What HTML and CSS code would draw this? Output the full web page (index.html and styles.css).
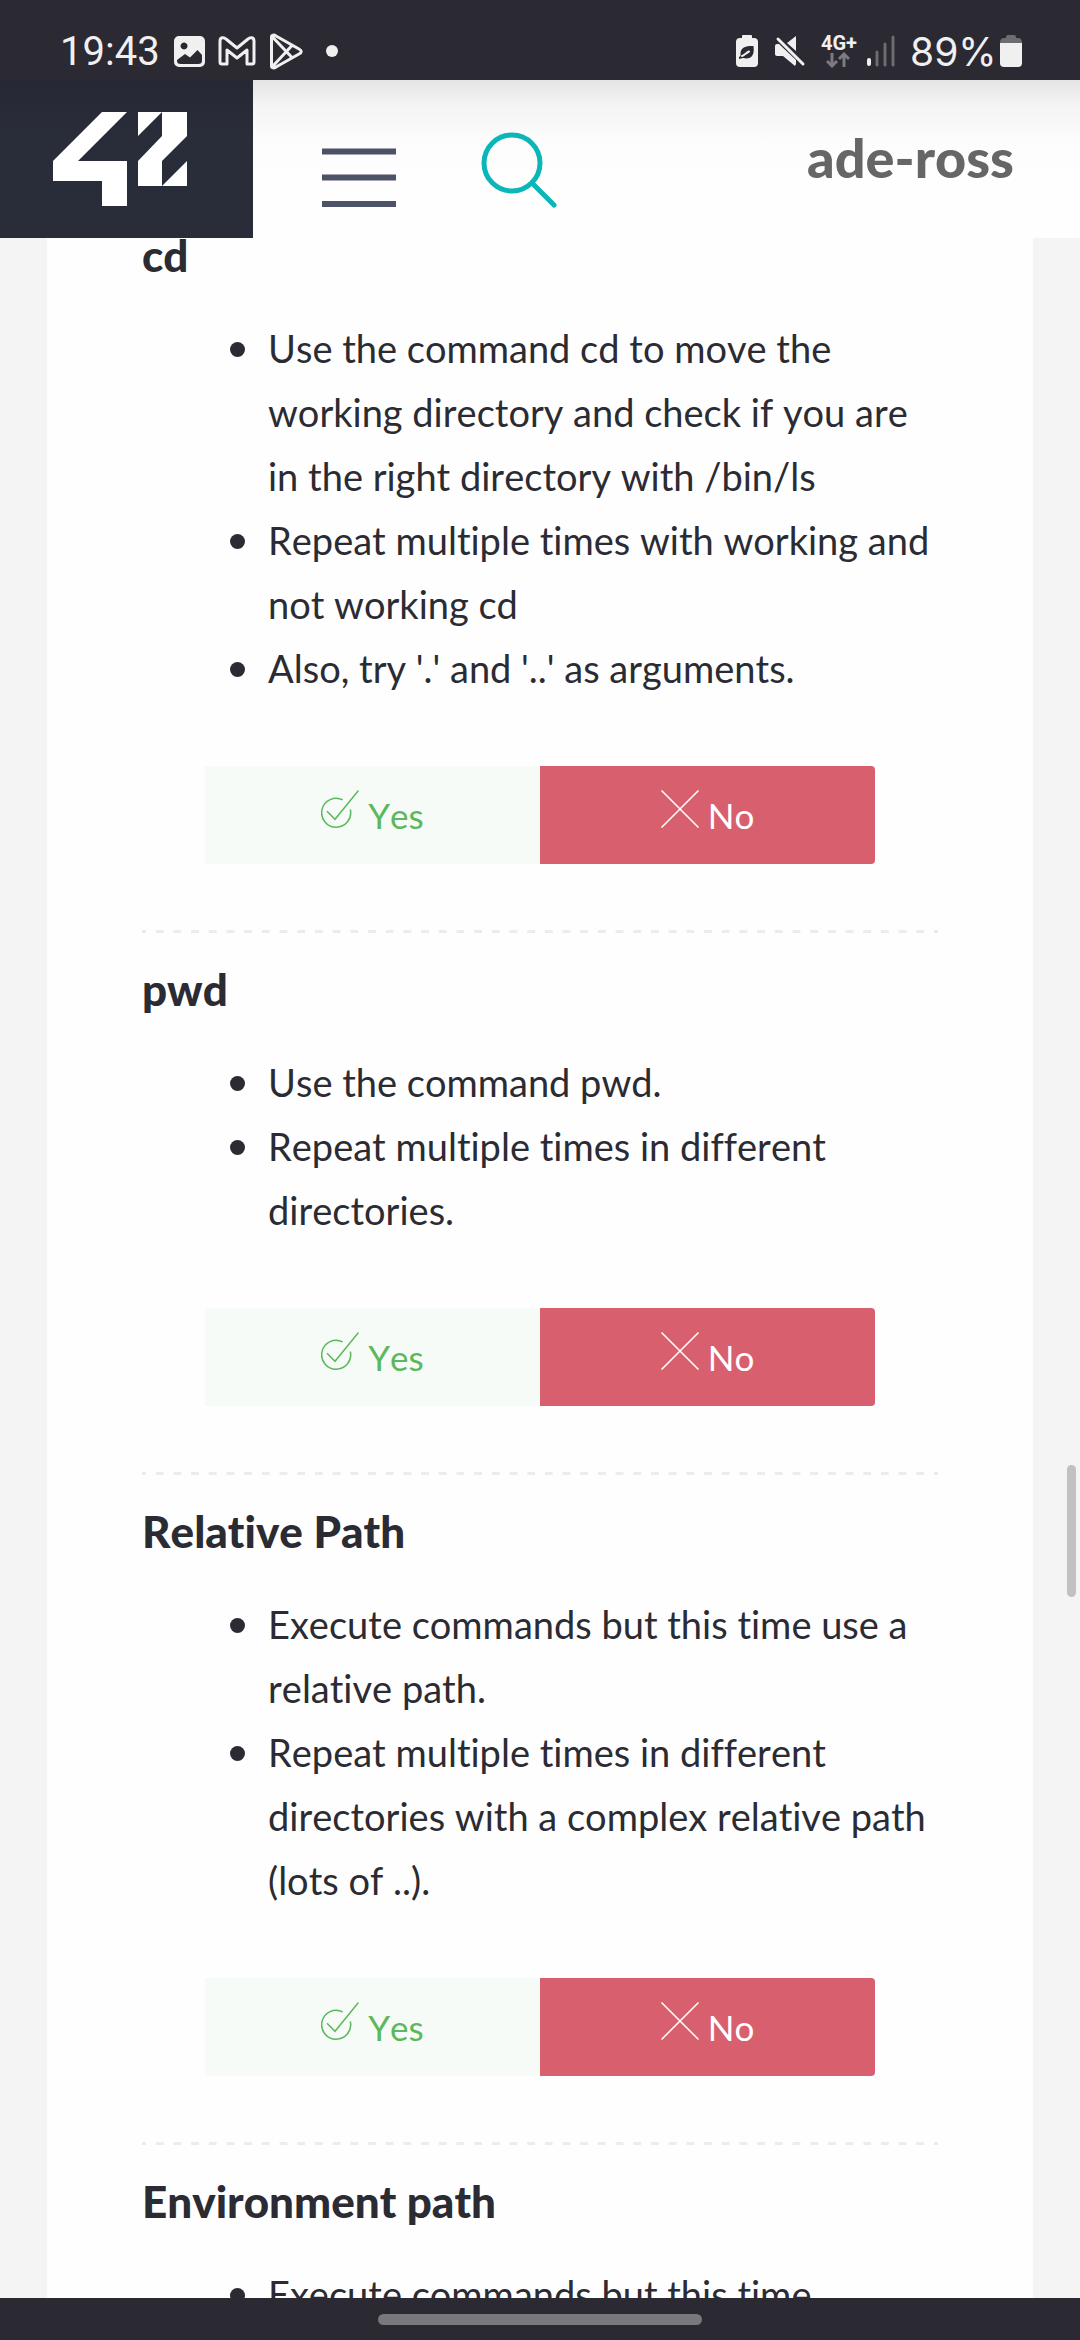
FILE: index.html
```
<!DOCTYPE html>
<html lang="en">
<head>
<meta charset="utf-8">
<meta name="viewport" content="width=device-width, initial-scale=1">
<title>Evaluation</title>
<link rel="stylesheet" href="styles.css">
</head>
<body>
<svg class="defs" aria-hidden="true">
  <symbol id="check" viewBox="0 0 38 38"><path d="M21.700 9.800A14.500 14.500 0 1 0 29.300 19.500M6 21.300 14 29.300 37.500.500"/></symbol>
  <symbol id="cross" viewBox="0 0 38 38"><path d="M.500.500 37.500 37.500M37.500.500.500 37.500"/></symbol>
</svg>
<div class="status">
  <span class="time">19:43</span>
  <svg class="notices" viewBox="174 32 166 38" aria-hidden="true">
    <path fill-rule="evenodd" d="M179 36H200a5 5 0 0 1 5 5V62a5 5 0 0 1-5 5H179a5 5 0 0 1-5-5V41a5 5 0 0 1 5-5ZM184 42.500a3.500 3.500 0 1 0 .1 0ZM177 60.500C177 63 178 64 181 64H198C201 64 202 63 202 60.500V55L197.500 50 190 57.500 185 54 177 60Z"/>
    <path class="line" d="M220 62V41C220 37 224 37 226 39L237 48 248 39C250 37 254 37 254 41V62C254 64 253 64 252 64H247V50L237 58 227 50V64H222C221 64 220 64 220 62Z"/>
    <path class="line" d="M271.500 37V66C271.500 68 274 68.500 276 67L299 54C302 52.500 302 50.500 299 49L276 36C274 34.500 271.500 35 271.500 37ZM272.500 37 292 57.500M272.500 66.500 292 45.500"/>
    <circle cx="332" cy="51" r="6"/>
  </svg>
  <span class="grow"></span>
  <svg class="modes" viewBox="737 34 70 34" aria-hidden="true">
    <path d="M743 38V36Q743 35 744 35H752Q753 35 753 36V38H755Q759 38 759 42V63Q759 67 755 67H741Q737 67 737 63V42Q737 38 741 38Z"/>
    <path class="leaf" d="M754.500 46C746 45.500 742 48 741.500 53L741.500 56 740 57V59L744 58C751 59.500 756 57 754.500 46Z"/>
    <path class="vein" d="M743 56C745 55.500 747 53 750 51.500"/>
    <path d="M780 44H778Q776 44 776 46V54Q776 56 778 56H784L796 66 797 64V60ZM788 43 797 36V51Z"/>
    <path class="line" d="M779 39 804 64"/>
  </svg>
  <span class="network"><span>4G+</span>
    <svg class="arrows" viewBox="0 0 24 16" aria-hidden="true"><path d="M6 1V14M1 9 6 14 11 9M18 15V2M13 7 18 2 23 7"/></svg>
  </span>
  <svg class="signal" viewBox="0 0 28 32" aria-hidden="true"><path class="on" d="M2 25V29"/><path d="M10 17V30M18 9V30M26 2V30"/></svg>
  <span class="percent">89%</span>
  <svg class="battery" viewBox="0 0 22 32" aria-hidden="true"><path class="dim" d="M6 3V2Q6 0 8 0H14Q16 0 16 2V3H18Q22 3 22 8H0Q0 3 4 3Z"/><path d="M0 8H22V28Q22 32 18 32H4Q0 32 0 28Z"/></svg>
</div>
<header class="header">
  <a class="logo" href="#" aria-label="42">
    <svg viewBox="0 0 134 94"><path d="M49 0H74L25 49H74V94H49V69H0V49ZM85 0H109L85 24ZM109 0H134V24L109 49V74H85V49L109 24ZM134 49V74H109Z"/></svg>
  </a>
  <button class="menu" type="button" aria-label="Menu"><svg viewBox="0 0 74 60"><path d="M0 3.500H74M0 29.500H74M0 56H74"/></svg></button>
  <button class="search" type="button" aria-label="Search"><svg viewBox="0 0 76 76"><circle cx="31" cy="31" r="28"/><path d="M51.500 51.500 73 73"/></svg></button>
  <span class="grow"></span>
  <a class="user" href="#">ade-ross</a>
</header>
<main class="main">
  <div class="sheet">
    <section class="question">
      <h2>cd</h2>
      <ul>
        <li>Use the command cd to move the working directory and check if you are in the right directory with /bin/ls</li>
        <li>Repeat multiple times with working and not working cd</li>
        <li>Also, try '.' and '..' as arguments.</li>
      </ul>
      <div class="answers"><button class="yes" type="button"><svg><use href="#check"/></svg>Yes</button><button class="no" type="button"><svg><use href="#cross"/></svg>No</button></div>
    </section>
    <section class="question">
      <h2>pwd</h2>
      <ul>
        <li>Use the command pwd.</li>
        <li>Repeat multiple times in different directories.</li>
      </ul>
      <div class="answers"><button class="yes" type="button"><svg><use href="#check"/></svg>Yes</button><button class="no" type="button"><svg><use href="#cross"/></svg>No</button></div>
    </section>
    <section class="question">
      <h2>Relative Path</h2>
      <ul>
        <li>Execute commands but this time use a relative path.</li>
        <li>Repeat multiple times in different directories with a complex relative path (lots of ..).</li>
      </ul>
      <div class="answers"><button class="yes" type="button"><svg><use href="#check"/></svg>Yes</button><button class="no" type="button"><svg><use href="#cross"/></svg>No</button></div>
    </section>
    <section class="question">
      <h2>Environment path</h2>
      <ul>
        <li>Execute commands but this time</li>
      </ul>
    </section>
  </div>
  <div class="thumb"></div>
</main>
<div class="gesture"><div class="pill"></div></div>
</body>
</html>
```

FILE: styles.css
```
* { box-sizing: border-box; }
body {
  margin: 0;
  height: 100vh;
  display: flex;
  flex-direction: column;
  overflow: hidden;
  background: #f4f4f4;
  color: #2b2b33;
  font-family: Lato, "Open Sans", sans-serif;
  font-size: 38px;
  font-variant-ligatures: none;
  font-kerning: none;
}
button { border: 0; margin: 0; padding: 0; background: none; font: inherit; color: inherit; }
a { color: inherit; text-decoration: none; }
svg { display: block; flex: none; }
.defs { position: absolute; width: 0; height: 0; }
.grow { flex: 1; }

.status {
  flex: none;
  height: 80px;
  padding: 22px 58px 0 60px;
  display: flex;
  align-items: center;
  background: #2b2932;
  color: #f0f0f0;
  fill: #f0f0f0;
  font-family: Roboto, sans-serif;
  font-size: 40px;
}
.status .line { fill: none; stroke: #f0f0f0; stroke-width: 3; stroke-linejoin: round; stroke-linecap: round; }
.time { width: 114px; }
.notices { width: 166px; height: 38px; }
.modes { width: 70px; height: 34px; }
.modes .leaf { fill: #2b2932; }
.modes .vein { fill: none; stroke: #f0f0f0; stroke-width: 2; stroke-linecap: round; }
.network { width: 34px; margin-left: 15px; font-size: 20px; font-weight: 700; line-height: 16px; }
.arrows { width: 24px; height: 16px; margin: 1px 0 0 5px; fill: none; stroke: #7c7b80; stroke-width: 3; }
.signal { width: 28px; height: 32px; margin-left: 12px; fill: none; stroke: #6d6c72; stroke-width: 3; stroke-linecap: round; }
.signal .on { stroke: #f0f0f0; stroke-width: 4; }
.percent { margin-left: 15px; width: 90px; font-family: Inter, sans-serif; font-size: 39px; }
.battery { width: 22px; height: 32px; }
.battery .dim { fill: #6d6c72; }

.header {
  flex: none;
  height: 158px;
  display: flex;
  align-items: flex-start;
  padding-right: 66px;
  background: linear-gradient(#e4e4e4, #f4f4f4 16%, #fcfcfc 38%, #fefefe 60%);
}
.logo { width: 253px; height: 158px; padding: 32px 53px; background: linear-gradient(#262935, #292d39 35%); fill: #fff; }
.logo svg { width: 134px; height: 94px; }
.menu { margin: 68px 0 0 69px; }
.menu svg { width: 74px; height: 60px; fill: none; stroke: #4d5366; stroke-width: 6; }
.search { margin: 52px 0 0 85px; }
.search svg { width: 76px; height: 76px; fill: none; stroke: #0ab6b8; stroke-width: 5; stroke-linecap: round; }
.user { margin-top: 50px; font-size: 54px; font-weight: 900; line-height: 56px; color: #666; }

.main { flex: 1; min-height: 0; overflow: hidden; position: relative; padding: 0 47px; }
.sheet { background: #fefefe; padding: 0 95px; }
.question { display: flow-root; }
.question + .question {
  padding-top: 42px;
  background: linear-gradient(90deg, #ececec 4px, transparent 4px calc(100% - 4px), #ececec calc(100% - 4px)) 0 0 / calc(100% / 45) 3px repeat-x;
}
h2 { margin: 0; font-size: 44px; font-weight: 900; line-height: 34px; }
ul { list-style: none; margin: 44px 0 66px; padding: 0 0 0 88px; line-height: 64px; }
li { display: grid; grid-template-columns: 15px 1fr; column-gap: 23px; }
li::before { content: ""; height: 15px; margin-top: 26px; border-radius: 50%; background: currentColor; }
.answers { display: grid; grid-template-columns: 1fr 1fr; height: 98px; margin: 0 63px 66px; }
.answers button { display: flex; align-items: center; justify-content: center; gap: 9px; font-size: 35px; }
.answers svg { width: 38px; height: 38px; margin-bottom: 12px; fill: none; stroke: currentColor; stroke-width: 1.5; }
.yes { background: #f6fbf7; color: #5cb85c; }
.no { background: #d8606e; color: #fff; border-radius: 0 4px 4px 0; }
.thumb { position: absolute; right: 4px; top: 1227px; width: 9px; height: 132px; border-radius: 5px; background: #c1c1c1; }

.gesture { flex: none; height: 42px; display: flex; justify-content: center; align-items: center; background: #2b2932; }
.pill { width: 324px; height: 11px; border-radius: 6px; background: #79787d; }
```
